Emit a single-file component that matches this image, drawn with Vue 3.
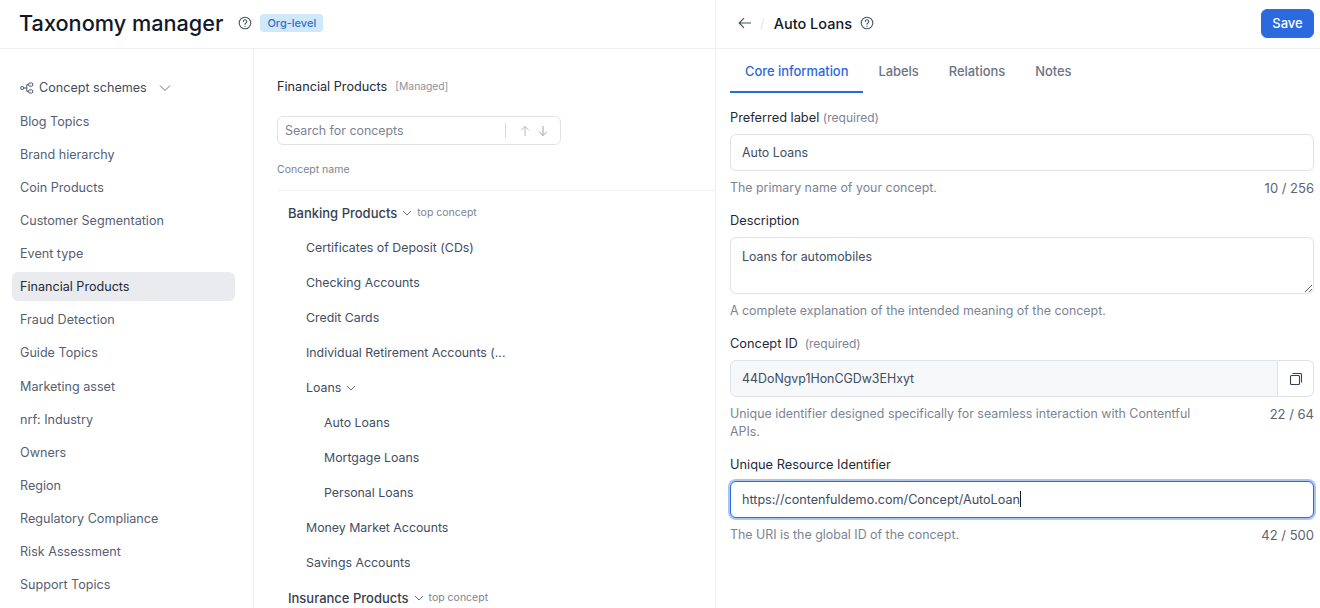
<script setup>
const schemes = [
  'Blog Topics', 'Brand hierarchy', 'Coin Products', 'Customer Segmentation', 'Event type',
  'Financial Products', 'Fraud Detection', 'Guide Topics', 'Marketing asset', 'nrf: Industry',
  'Owners', 'Region', 'Regulatory Compliance', 'Risk Assessment', 'Support Topics'
]

const concepts = [
  { name: 'Banking Products', level: 0, top: true },
  { name: 'Certificates of Deposit (CDs)', level: 1 },
  { name: 'Checking Accounts', level: 1 },
  { name: 'Credit Cards', level: 1 },
  { name: 'Individual Retirement Accounts (...', level: 1 },
  { name: 'Loans', level: 1, open: true },
  { name: 'Auto Loans', level: 2 },
  { name: 'Mortgage Loans', level: 2 },
  { name: 'Personal Loans', level: 2 },
  { name: 'Money Market Accounts', level: 1 },
  { name: 'Savings Accounts', level: 1 },
  { name: 'Insurance Products', level: 0, top: true }
]

const tabs = ['Core information', 'Labels', 'Relations', 'Notes']
</script>

<template>
  <div class="page">
    <section class="left">
      <header class="top-bar">
        <h1>Taxonomy manager</h1>
        <svg class="help" width="14" height="14" viewBox="0 0 14 14" fill="none" stroke="#4b5563" stroke-width="1.1">
          <circle cx="7" cy="7" r="5.8" />
          <path d="M5.3 5.5a1.75 1.75 0 1 1 2.6 1.5c-.6.35-.9.7-.9 1.3" stroke-linecap="round" />
          <circle cx="7" cy="10.2" r=".4" fill="#4b5563" stroke-width=".5" />
        </svg>
        <span class="badge">Org-level</span>
      </header>

      <div class="columns">
        <nav class="sidebar">
          <div class="scheme-head">
            <svg width="14" height="12" viewBox="0 0 14 12" fill="none" stroke="#4b5563" stroke-width="1">
              <circle cx="2.2" cy="6" r="1.6" />
              <rect x="8.7" y="1" width="4" height="3.2" rx="1" />
              <rect x="8.7" y="7.8" width="4" height="3.2" rx="1" />
              <path d="M3.8 6h3M6.8 2.6v6.8M6.8 2.6h1.9M6.8 9.4h1.9" />
            </svg>
            <span>Concept schemes</span>
            <svg class="caret-big" width="12" height="8" viewBox="0 0 12 8" fill="none" stroke="#6b7280" stroke-width="1">
              <path d="M1 1.5l5 5 5-5" />
            </svg>
          </div>
          <a v-for="s in schemes" :key="s" class="scheme" :class="{ active: s === 'Financial Products' }">{{ s }}</a>
        </nav>

        <main class="list">
          <div class="list-title">
            <span class="list-name">Financial Products</span>
            <span class="managed">[Managed]</span>
          </div>
          <div class="search">
            <span class="search-text">Search for concepts</span>
            <span class="search-sep"></span>
            <svg width="10" height="12" viewBox="0 0 10 12" fill="none" stroke="#b4bac3" stroke-width="1">
              <path d="M5 11V1.5M1.2 5.2L5 1.4l3.8 3.8" />
            </svg>
            <svg width="10" height="12" viewBox="0 0 10 12" fill="none" stroke="#9ca3af" stroke-width="1">
              <path d="M5 1v9.5M1.2 6.8L5 10.6l3.8-3.8" />
            </svg>
          </div>
          <div class="col-head">Concept name</div>
          <div class="tree">
            <div v-for="c in concepts" :key="c.name" class="node" :class="['lvl' + c.level]">
              <span class="node-name">{{ c.name }}</span>
              <svg v-if="c.top || c.open" class="node-caret" width="10" height="6" viewBox="0 0 10 6" fill="none" stroke="#6b7280" stroke-width="1">
                <path d="M1 1l4 4 4-4" />
              </svg>
              <span v-if="c.top" class="top-concept">top concept</span>
            </div>
          </div>
        </main>
      </div>
    </section>

    <aside class="detail">
      <header class="detail-bar">
        <svg width="14" height="12" viewBox="0 0 14 12" fill="none" stroke="#4b5563" stroke-width="1.2">
          <path d="M13 6H1.5M6 1.2L1.2 6 6 10.8" />
        </svg>
        <span class="slash">/</span>
        <span class="detail-title">Auto Loans</span>
        <svg class="help" width="14" height="14" viewBox="0 0 14 14" fill="none" stroke="#4b5563" stroke-width="1.1">
          <circle cx="7" cy="7" r="5.8" />
          <path d="M5.3 5.5a1.75 1.75 0 1 1 2.6 1.5c-.6.35-.9.7-.9 1.3" stroke-linecap="round" />
          <circle cx="7" cy="10.2" r=".4" fill="#4b5563" stroke-width=".5" />
        </svg>
        <button class="save">Save</button>
      </header>

      <div class="tabs">
        <span v-for="(t, i) in tabs" :key="t" class="tab" :class="{ current: i === 0 }">{{ t }}</span>
      </div>

      <form class="form" @submit.prevent>
        <div class="field">
          <div class="label">Preferred label <span class="req">(required)</span></div>
          <input class="input" type="text" value="Auto Loans" />
          <div class="hint">
            <span>The primary name of your concept.</span>
            <span class="count">10 / 256</span>
          </div>
        </div>

        <div class="field">
          <div class="label">Description</div>
          <textarea class="input area">Loans for automobiles</textarea>
          <div class="hint">
            <span>A complete explanation of the intended meaning of the concept.</span>
          </div>
        </div>

        <div class="field">
          <div class="label">Concept ID <span class="req">&nbsp;(required)</span></div>
          <div class="id-row">
            <input class="input id-input" type="text" value="44DoNgvp1HonCGDw3EHxyt" readonly />
            <span class="copy">
              <svg width="14" height="14" viewBox="0 0 14 14" fill="none" stroke="#374151" stroke-width="1.1">
                <rect x="1.5" y="3.5" width="9" height="9" rx="1" />
                <path d="M3.5 1.5h8a1 1 0 0 1 1 1v8" />
              </svg>
            </span>
          </div>
          <div class="hint tall">
            <span class="hint-wrap">Unique identifier designed specifically for seamless interaction with Contentful APIs.</span>
            <span class="count">22 / 64</span>
          </div>
        </div>

        <div class="field">
          <div class="label">Unique Resource Identifier</div>
          <div class="input focused">https://contenfuldemo.com/Concept/AutoLoan<i class="cursor"></i></div>
          <div class="hint">
            <span>The URI is the global ID of the concept.</span>
            <span class="count">42 / 500</span>
          </div>
        </div>
      </form>
    </aside>
  </div>
</template>

<style scoped>
.page {
  display: flex;
  width: 1320px;
  height: 608px;
  overflow: hidden;
  background: #fff;
  font-family: Inter, "Liberation Sans", sans-serif;
  font-size: 13px;
  color: #414d63;
}

.left {
  width: 715px;
  flex: none;
  display: flex;
  flex-direction: column;
}

.top-bar {
  height: 49px;
  box-sizing: border-box;
  flex: none;
  display: flex;
  align-items: center;
  padding: 0 0 2px 19px;
  border-bottom: 1px solid #eef0f2;
}

h1 {
  margin: 0;
  font-size: 21.7px;
  font-weight: 500;
  color: #111827;
}

.top-bar .help {
  margin-left: 15px;
}

.badge {
  margin-left: 8px;
  height: 18px;
  line-height: 18px;
  padding: 0 7px;
  border-radius: 4px;
  background: #cfe8fb;
  color: #2f6fd0;
  font-size: 11px;
  font-weight: 500;
}

.columns {
  flex: 1;
  display: flex;
  min-height: 0;
}

.sidebar {
  width: 254px;
  box-sizing: border-box;
  flex: none;
  border-right: 1px solid #eef0f2;
  padding: 25px 18px 0 12px;
  display: flex;
  flex-direction: column;
  font-size: 12.6px;
}

.scheme-head {
  height: 27px;
  display: flex;
  align-items: center;
  padding-left: 8px;
  color: #414d63;
  margin-bottom: 6px;
}

.scheme-head span {
  margin-left: 5px;
}

.caret-big {
  margin-left: 12px;
}

.scheme {
  height: 29px;
  line-height: 29px;
  margin-bottom: 4.07px;
  padding-left: 8px;
  border-radius: 6px;
  color: #566072;
}

.scheme.active {
  background: #e9ebee;
  color: #1f2937;
}

.list {
  flex: 1;
  min-width: 0;
  padding: 0 0 0 23px;
}

.list-title {
  height: 16px;
  margin-top: 29px;
  display: flex;
  align-items: center;
  gap: 8px;
}

.list-name {
  font-size: 12.7px;
  color: #1f2937;
}

.managed {
  font-size: 10.3px;
  color: #8a93a0;
}

.search {
  width: 284px;
  height: 29px;
  box-sizing: border-box;
  margin-top: 22px;
  border: 1px solid #dfe2e6;
  border-radius: 6px;
  display: flex;
  align-items: center;
  padding-left: 7px;
}

.search-text {
  flex: 1;
  font-size: 12.4px;
  color: #7b8493;
}

.search-sep {
  width: 1px;
  height: 15px;
  background: #d5d9de;
  margin-right: 14px;
}

.search svg {
  margin-right: 8px;
}

.search svg:last-child {
  margin-right: 12px;
}

.col-head {
  height: 44px;
  line-height: 48px;
  border-bottom: 1px solid #eef0f2;
  margin-top: 1px;
  font-size: 10.5px;
  color: #7b8493;
}

.tree {
  padding-top: 4px;
}

.node {
  height: 35px;
  display: flex;
  align-items: center;
  white-space: nowrap;
  font-size: 12.35px;
}

.lvl0 {
  padding-left: 11px;
  font-size: 13px;
}

.lvl0 .node-name {
  font-weight: 500;
  color: #374151;
}

.lvl1 {
  padding-left: 29px;
}

.lvl2 {
  padding-left: 47px;
}

.node-caret {
  margin-left: 5px;
}

.top-concept {
  margin-left: 5px;
  font-size: 10.5px;
  color: #7b8493;
}

.detail {
  flex: 1;
  min-width: 0;
  border-left: 1px solid #eef0f2;
}

.detail-bar {
  height: 49px;
  box-sizing: border-box;
  display: flex;
  align-items: center;
  padding: 0 6px 2px 22px;
  border-bottom: 1px solid #eef0f2;
}

.slash {
  margin: 0 9px 0 8px;
  color: #e5e7eb;
}

.detail-title {
  font-size: 14.5px;
  font-weight: 500;
  color: #111827;
}

.detail-bar .help {
  margin-left: 8px;
}

.save {
  margin-left: auto;
  height: 29px;
  width: 53px;
  padding: 0;
  border: 1px solid #2f6fe0;
  border-radius: 6px;
  background: #2a6ade;
  color: #fff;
  font: 500 13px Inter, "Liberation Sans", sans-serif;
}

.tabs {
  height: 44px;
  display: flex;
  padding-left: 14px;
}

.tab {
  padding: 0 15px;
  line-height: 46px;
  font-weight: 500;
  font-size: 12.9px;
  color: #6b7484;
}

.tab.current {
  color: #2a6ade;
  box-shadow: inset 0 -2px 0 #2a6ade;
}

.form {
  padding: 0 6px 0 14px;
}

.field {
  margin-top: 16px;
}

.label {
  height: 17px;
  line-height: 17px;
  margin-bottom: 8px;
  font-size: 12.8px;
  color: #1f2937;
}

.req {
  font-size: 12px;
  color: #7b8493;
}

.input {
  display: block;
  width: 100%;
  height: 37px;
  box-sizing: border-box;
  border: 1px solid #dfe2e6;
  border-radius: 6px;
  padding: 0 11px;
  background: #fff;
  font: 12.4px Inter, "Liberation Sans", sans-serif;
  color: #414d63;
  outline: none;
}

.area {
  height: 57px;
  padding-top: 11px;
  line-height: 16px;
  resize: vertical;
}

.id-row {
  display: flex;
}

.id-input {
  flex: 1;
  min-width: 0;
  background: #f6f8f9;
  border-radius: 6px 0 0 6px;
}

.copy {
  width: 36px;
  height: 37px;
  box-sizing: border-box;
  flex: none;
  border: 1px solid #dfe2e6;
  border-left: 0;
  border-radius: 0 6px 6px 0;
  display: flex;
  align-items: center;
  justify-content: center;
}

.focused {
  line-height: 35px;
  font-size: 12.6px;
  border-color: #2a6ade;
  box-shadow: 0 0 0 2px #a9c6f2;
}

.cursor {
  display: inline-block;
  width: 1px;
  height: 16px;
  vertical-align: -3px;
  background: #111827;
}

.hint {
  height: 16px;
  line-height: 16px;
  margin-top: 9px;
  display: flex;
  justify-content: space-between;
  font-size: 12.4px;
  color: #7b8493;
}

.hint.tall {
  height: 35px;
  line-height: 18px;
  margin-top: 8px;
}

.hint-wrap {
  width: 480px;
}

.count {
  font-size: 13px;
  color: #5b6472;
}
</style>

<style>
html,
body {
  margin: 0;
  background: #fff;
}
</style>
